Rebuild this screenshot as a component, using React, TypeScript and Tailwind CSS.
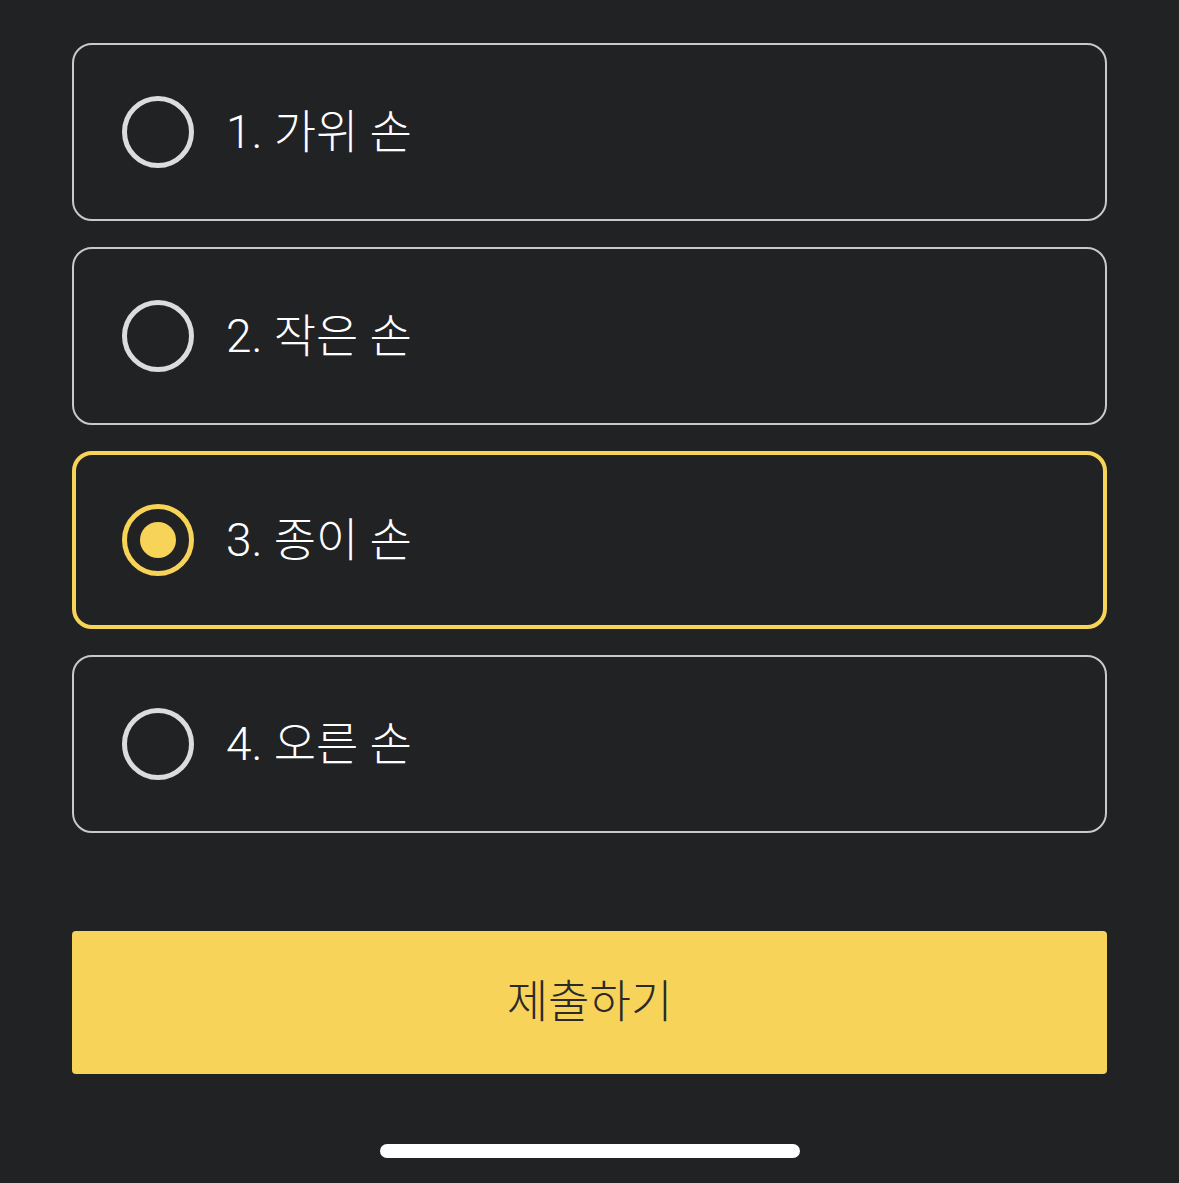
import { useState } from 'react';

const options = ['1. 가위 손', '2. 작은 손', '3. 종이 손', '4. 오른 손'];

export default function App() {
  const [selected, setSelected] = useState(2);

  return (
    <div className="w-[1179px] h-[1183px] bg-[#212224] flex flex-col px-[72px] pt-[43px] font-['Roboto','Noto_Sans_CJK_KR',sans-serif]">
      {/* Options */}
      <div className="flex flex-col gap-[26px]">
        {options.map((label, i) => {
          const active = i === selected;
          return (
            <button
              key={label}
              onClick={() => setSelected(i)}
              className={
                active
                  ? 'h-[178px] w-full flex items-center gap-[32px] rounded-[20px] border-[4px] border-[#f7d358] pl-[46px] text-left'
                  : 'h-[178px] w-full flex items-center gap-[32px] rounded-[20px] border-[2.5px] border-[#c9c9cb] pl-[48px] text-left'
              }
            >
              {active ? (
                <span className="w-[72px] h-[72px] rounded-full border-[5px] border-[#f7d358] flex items-center justify-center shrink-0">
                  <span className="w-[36px] h-[36px] rounded-full bg-[#f7d358]" />
                </span>
              ) : (
                <span className="w-[72px] h-[72px] rounded-full border-[5px] border-[#dcdcde] shrink-0" />
              )}
              <span className="text-[46px] leading-none text-white font-light">{label}</span>
            </button>
          );
        })}
      </div>

      {/* Submit */}
      <button className="mt-[98px] h-[143px] w-full rounded-[4px] bg-[#f7d35a] flex items-center justify-center">
        <span className="text-[45px] leading-none text-[#2a2a28] font-light">제출하기</span>
      </button>

      {/* Home indicator */}
      <div className="mt-[70px] flex justify-center">
        <div className="w-[420px] h-[14px] rounded-full bg-white" />
      </div>
    </div>
  );
}
